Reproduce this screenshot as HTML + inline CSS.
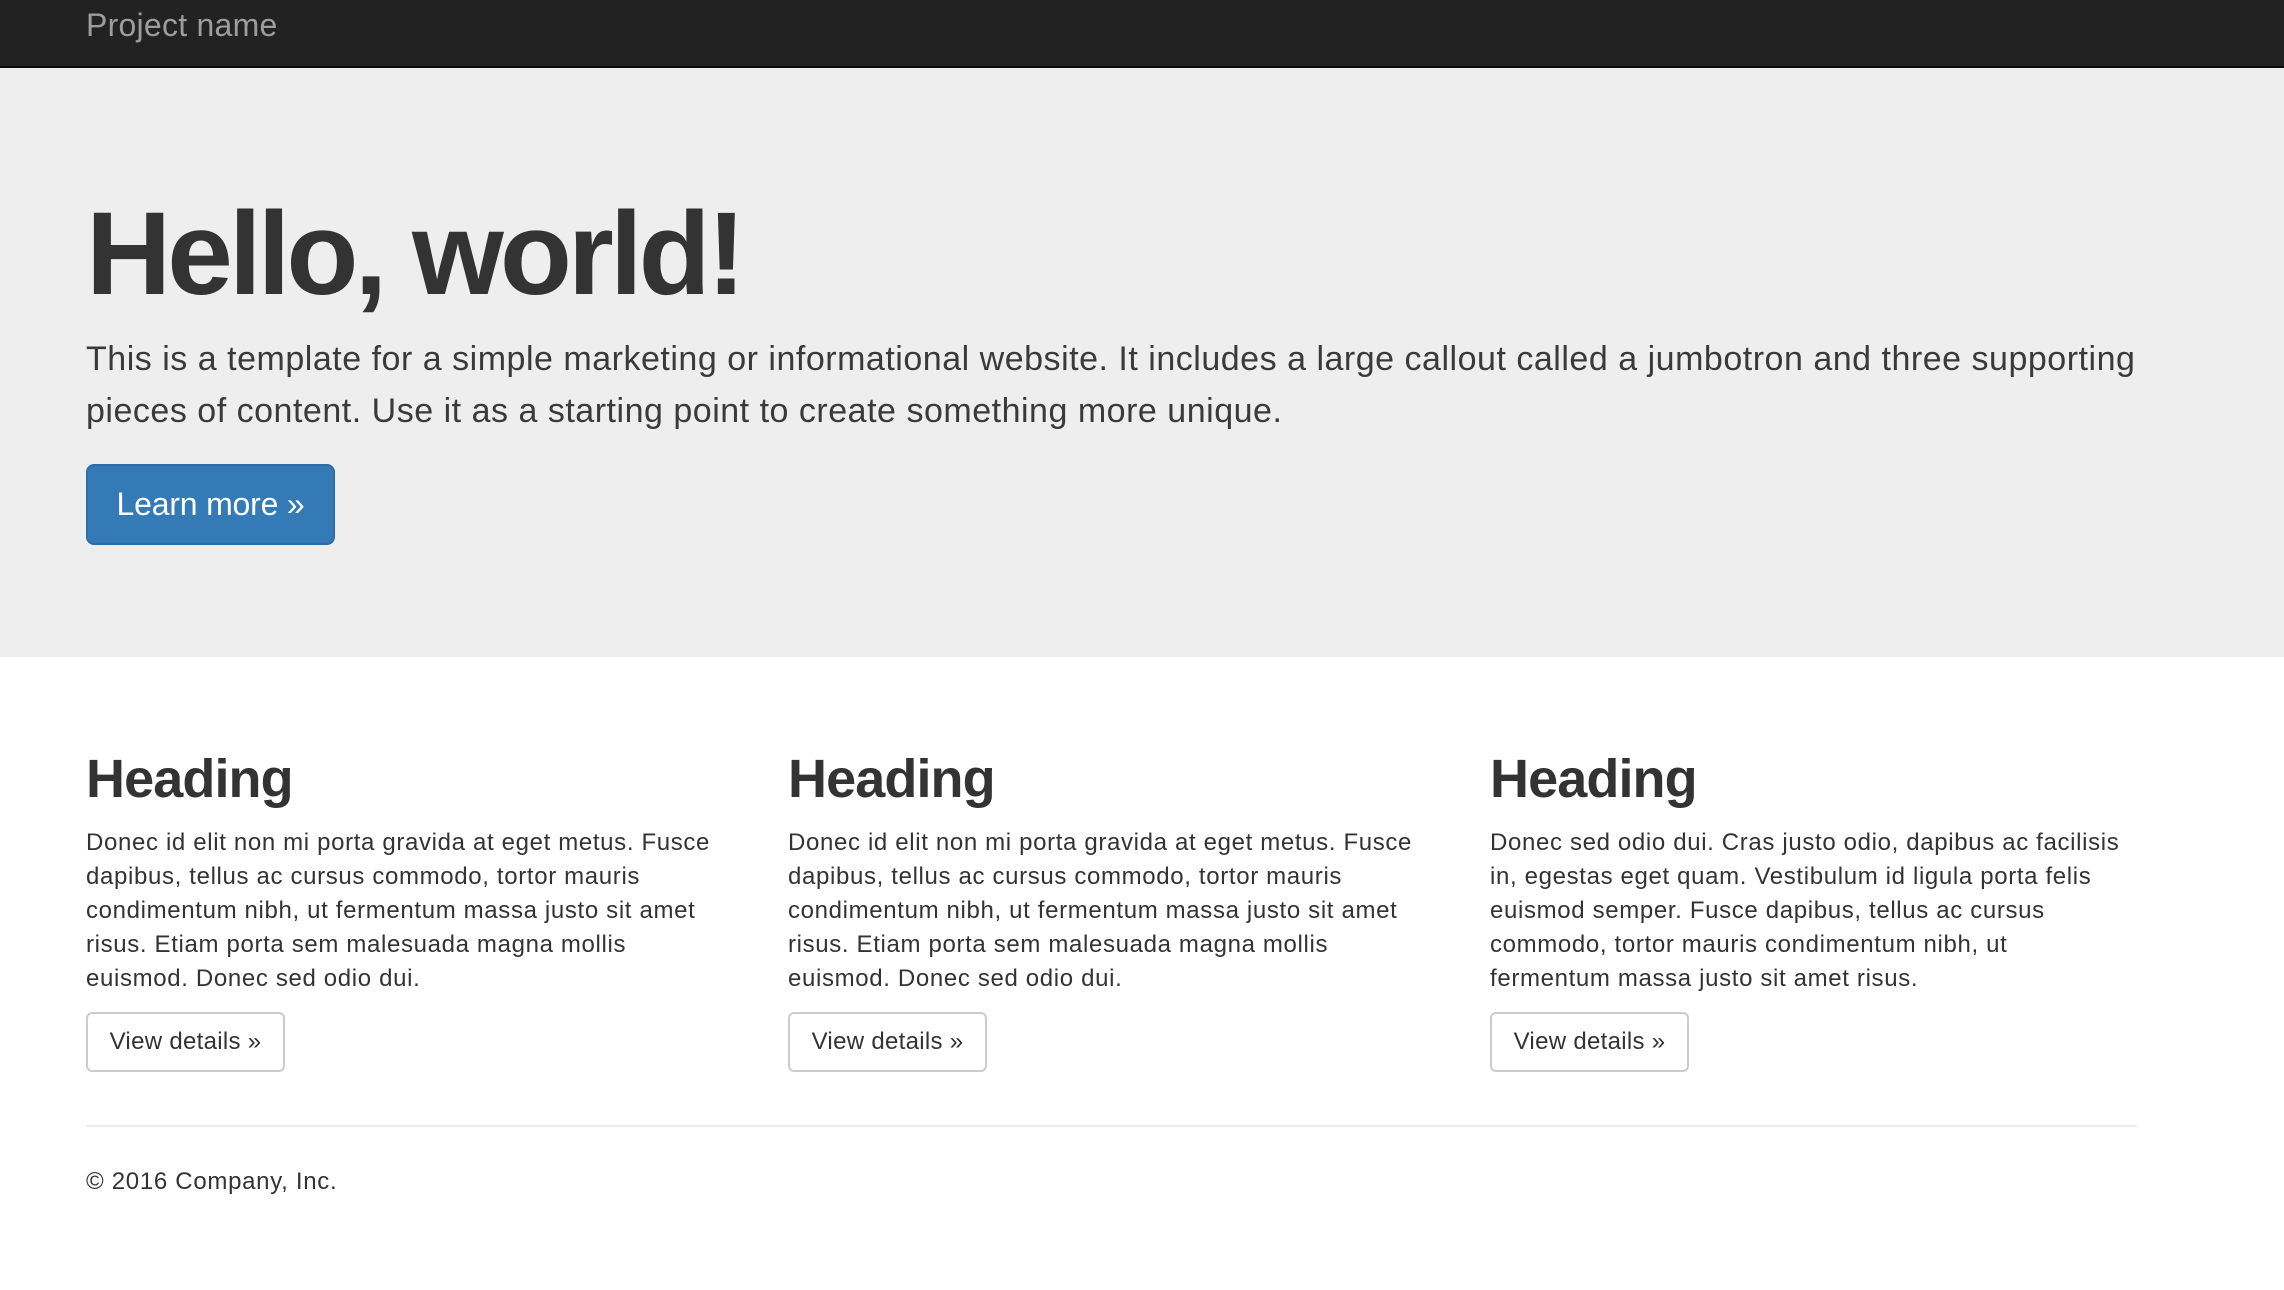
<!DOCTYPE html>
<html><head><meta charset="utf-8"><style>
*{margin:0;padding:0;box-sizing:border-box}
body{width:2284px;height:1290px;background:#fff;font-family:"Liberation Sans",Arial,sans-serif;color:#333;position:relative;overflow:hidden}
.abs{position:absolute;white-space:nowrap}
.nav{left:0;top:0;width:2284px;height:68px;background:#222;border-bottom:2px solid #080808}
.brand{left:86px;top:9px;font-size:32px;line-height:32px;color:#9d9d9d;letter-spacing:0.25px}
.jumbo{left:0;top:68px;width:2284px;height:589px;background:#eee}
h1{position:absolute;left:86px;top:195px;font-size:118px;line-height:118px;font-weight:bold;color:#333;letter-spacing:-4px}
.lead{left:86px;top:333px;font-size:34px;line-height:52px;color:#3a3a3a;letter-spacing:0.51px}
.btnp{left:86px;top:464px;width:249px;height:81px;background:#337ab7;border:2px solid #2e6da4;border-radius:8px;color:#fff;font-size:32px;display:flex;align-items:center;justify-content:center;letter-spacing:-0.2px}
h2{position:absolute;top:752px;font-size:54px;line-height:54px;font-weight:bold;color:#333;letter-spacing:-0.9px}
.p{top:826px;font-size:24px;line-height:34px;color:#333;letter-spacing:0.65px}
.btnd{top:1012px;width:199px;height:60px;border:2px solid #ccc;border-radius:6px;font-size:24px;display:flex;align-items:center;justify-content:center;color:#333;letter-spacing:0.3px}
.hr{left:86px;top:1125px;width:2051px;height:2px;background:#eee}
.foot{left:86px;top:1170px;font-size:24px;line-height:24px;letter-spacing:0.7px}
</style></head><body>
<div class="abs nav"></div>
<div class="abs brand">Project name</div>
<div class="abs jumbo"></div>
<h1>Hello, world!</h1>
<div class="abs lead">This is a template for a simple marketing or informational website. It includes a large callout called a jumbotron and three supporting<br>pieces of content. Use it as a starting point to create something more unique.</div>
<div class="abs btnp">Learn more »</div>

<h2 style="left:86px">Heading</h2>
<h2 style="left:788px">Heading</h2>
<h2 style="left:1490px">Heading</h2>

<div class="abs p" style="left:86px">Donec id elit non mi porta gravida at eget metus. Fusce<br>dapibus, tellus ac cursus commodo, tortor mauris<br>condimentum nibh, ut fermentum massa justo sit amet<br>risus. Etiam porta sem malesuada magna mollis<br>euismod. Donec sed odio dui.</div>
<div class="abs p" style="left:788px">Donec id elit non mi porta gravida at eget metus. Fusce<br>dapibus, tellus ac cursus commodo, tortor mauris<br>condimentum nibh, ut fermentum massa justo sit amet<br>risus. Etiam porta sem malesuada magna mollis<br>euismod. Donec sed odio dui.</div>
<div class="abs p" style="left:1490px">Donec sed odio dui. Cras justo odio, dapibus ac facilisis<br>in, egestas eget quam. Vestibulum id ligula porta felis<br>euismod semper. Fusce dapibus, tellus ac cursus<br>commodo, tortor mauris condimentum nibh, ut<br>fermentum massa justo sit amet risus.</div>

<div class="abs btnd" style="left:86px">View details »</div>
<div class="abs btnd" style="left:788px">View details »</div>
<div class="abs btnd" style="left:1490px">View details »</div>

<div class="abs hr"></div>
<div class="abs foot">© 2016 Company, Inc.</div>
</body></html>
